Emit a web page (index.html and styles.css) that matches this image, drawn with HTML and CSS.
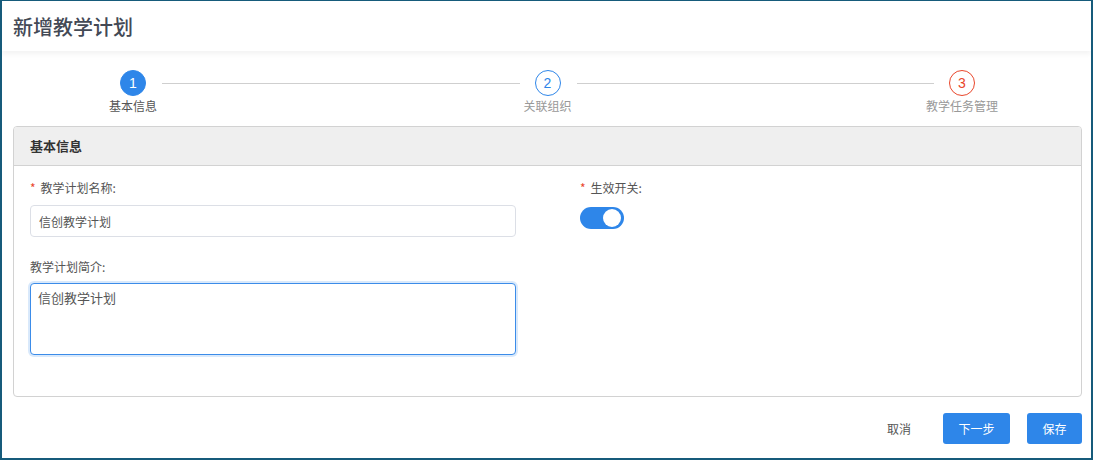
FILE: index.html
```html
<!DOCTYPE html>
<html lang="zh-CN">
<head>
    <meta charset="UTF-8">
    <title>新增教学计划</title>
    <link rel="stylesheet" href="styles.css">
</head>
<body>

<div class="page">
    <header class="page-header">新增教学计划</header>

    <div class="steps">
        <div class="step done">
            <div class="step-num">1</div>
            <div class="step-label">基本信息</div>
        </div>
        <div class="step-line"></div>
        <div class="step current">
            <div class="step-num">2</div>
            <div class="step-label">关联组织</div>
        </div>
        <div class="step-line"></div>
        <div class="step warn">
            <div class="step-num">3</div>
            <div class="step-label">教学任务管理</div>
        </div>
    </div>

    <div class="panel">
        <div class="panel-title">基本信息</div>
        <div class="panel-body">
            <div class="form-grid">
                <div class="field">
                    <label class="field-label"><span class="req">*</span>教学计划名称:</label>
                    <input class="text-input" type="text" value="信创教学计划">
                </div>
                <div class="field">
                    <label class="field-label"><span class="req">*</span>生效开关:</label>
                    <div class="switch on"><span class="knob"></span></div>
                </div>
                <div class="field second">
                    <label class="field-label">教学计划简介:</label>
                    <textarea class="text-area">信创教学计划</textarea>
                </div>
            </div>
        </div>
    </div>

    <div class="actions">
        <button class="btn-text">取消</button>
        <button class="btn-primary next">下一步</button>
        <button class="btn-primary">保存</button>
    </div>
</div>

</body>
</html>
```

FILE: styles.css
```css
* {
    box-sizing: border-box;
}

body {
    margin: 0;
    font-family: "Noto Sans CJK SC", "Noto Sans", sans-serif;
    background: #fff;
    color: #555;
}

.page {
    width: 1093px;
    height: 460px;
    border: 2px solid #165b7b;
    border-top-width: 1px;
    display: flex;
    flex-direction: column;
    overflow: hidden;
}

.page-header {
    height: 50px;
    padding: 0 11px;
    font-size: 20px;
    font-weight: 500;
    line-height: 52px;
    color: #434955;
    box-shadow: 0 3px 5px rgba(0, 0, 0, 0.05);
}

/* steps */
.steps {
    display: flex;
    align-items: flex-start;
    padding: 0 116px 0 118px;
    margin-top: 19px;
    height: 56px;
}

.step {
    width: 26px;
    display: flex;
    flex-direction: column;
    align-items: center;
}

.step-num {
    width: 26px;
    height: 26px;
    border-radius: 50%;
    border: 1px solid #2e86e9;
    color: #2e86e9;
    font-size: 14px;
    line-height: 24px;
    text-align: center;
    font-family: "Liberation Sans", sans-serif;
}

.step.done .step-num {
    background: #2e86e9;
    color: #fff;
}

.step.warn .step-num {
    border-color: #e9462b;
    color: #e9462b;
}

.step-label {
    width: 100px;
    margin: 1px -37px 0;
    text-align: center;
    font-size: 12px;
    line-height: 18px;
    color: #999;
}

.step.done .step-label {
    color: #555;
}

.step-line {
    flex: 1;
    height: 1px;
    background: #cfcfcf;
    margin: 13px 15px 0 16px;
}

/* panel */
.panel {
    margin: 0 9px 0 11px;
    height: 271px;
    border: 1px solid #d2d2d2;
    border-radius: 4px;
    overflow: hidden;
}

.panel-title {
    height: 39px;
    background: #efefef;
    border-bottom: 1px solid #d2d2d2;
    padding-left: 16px;
    font-size: 13px;
    font-weight: bold;
    line-height: 37px;
    color: #333;
}

.panel-body {
    padding: 12px 16px 0;
}

.form-grid {
    display: grid;
    grid-template-columns: 486px 1fr;
    column-gap: 64px;
}

.field-label {
    display: block;
    font-size: 12px;
    line-height: 20px;
    color: #555;
    margin-bottom: 7px;
}

.field.second {
    margin-top: 20px;
}

.field.second .field-label {
    margin-bottom: 6px;
}

.req {
    color: #e9462b;
    margin-right: 5px;
}

.text-input {
    width: 100%;
    height: 32px;
    border: 1px solid #dcdfe6;
    border-radius: 4px;
    padding: 0 8px;
    font-family: inherit;
    font-size: 12px;
    color: #555;
    outline: none;
}

.text-area {
    display: block;
    width: 100%;
    height: 72px;
    border: 1px solid #3b8ce9;
    border-radius: 4px;
    box-shadow: 0 0 0 2px rgba(46, 134, 233, 0.18);
    padding: 4px 7px;
    font-family: inherit;
    font-size: 13px;
    line-height: 20px;
    color: #555;
    resize: none;
    outline: none;
}

.switch {
    position: relative;
    width: 44px;
    height: 22px;
    margin-top: 9px;
    border-radius: 11px;
    background: #2e86e9;
}

.switch .knob {
    position: absolute;
    top: 2px;
    right: 3px;
    width: 18px;
    height: 18px;
    border-radius: 50%;
    background: #fff;
}

/* footer */
.actions {
    display: flex;
    justify-content: flex-end;
    gap: 17px;
    padding-right: 9px;
    margin-top: 16px;
}

.actions button {
    height: 31px;
    font-family: inherit;
    font-size: 12px;
    border: none;
    border-radius: 3px;
    cursor: pointer;
}

.btn-text {
    width: 54px;
    background: none;
    color: #555;
}

.btn-primary {
    width: 55px;
    background: #2e86e9;
    color: #fff;
}

.btn-primary.next {
    width: 67px;
}
```
